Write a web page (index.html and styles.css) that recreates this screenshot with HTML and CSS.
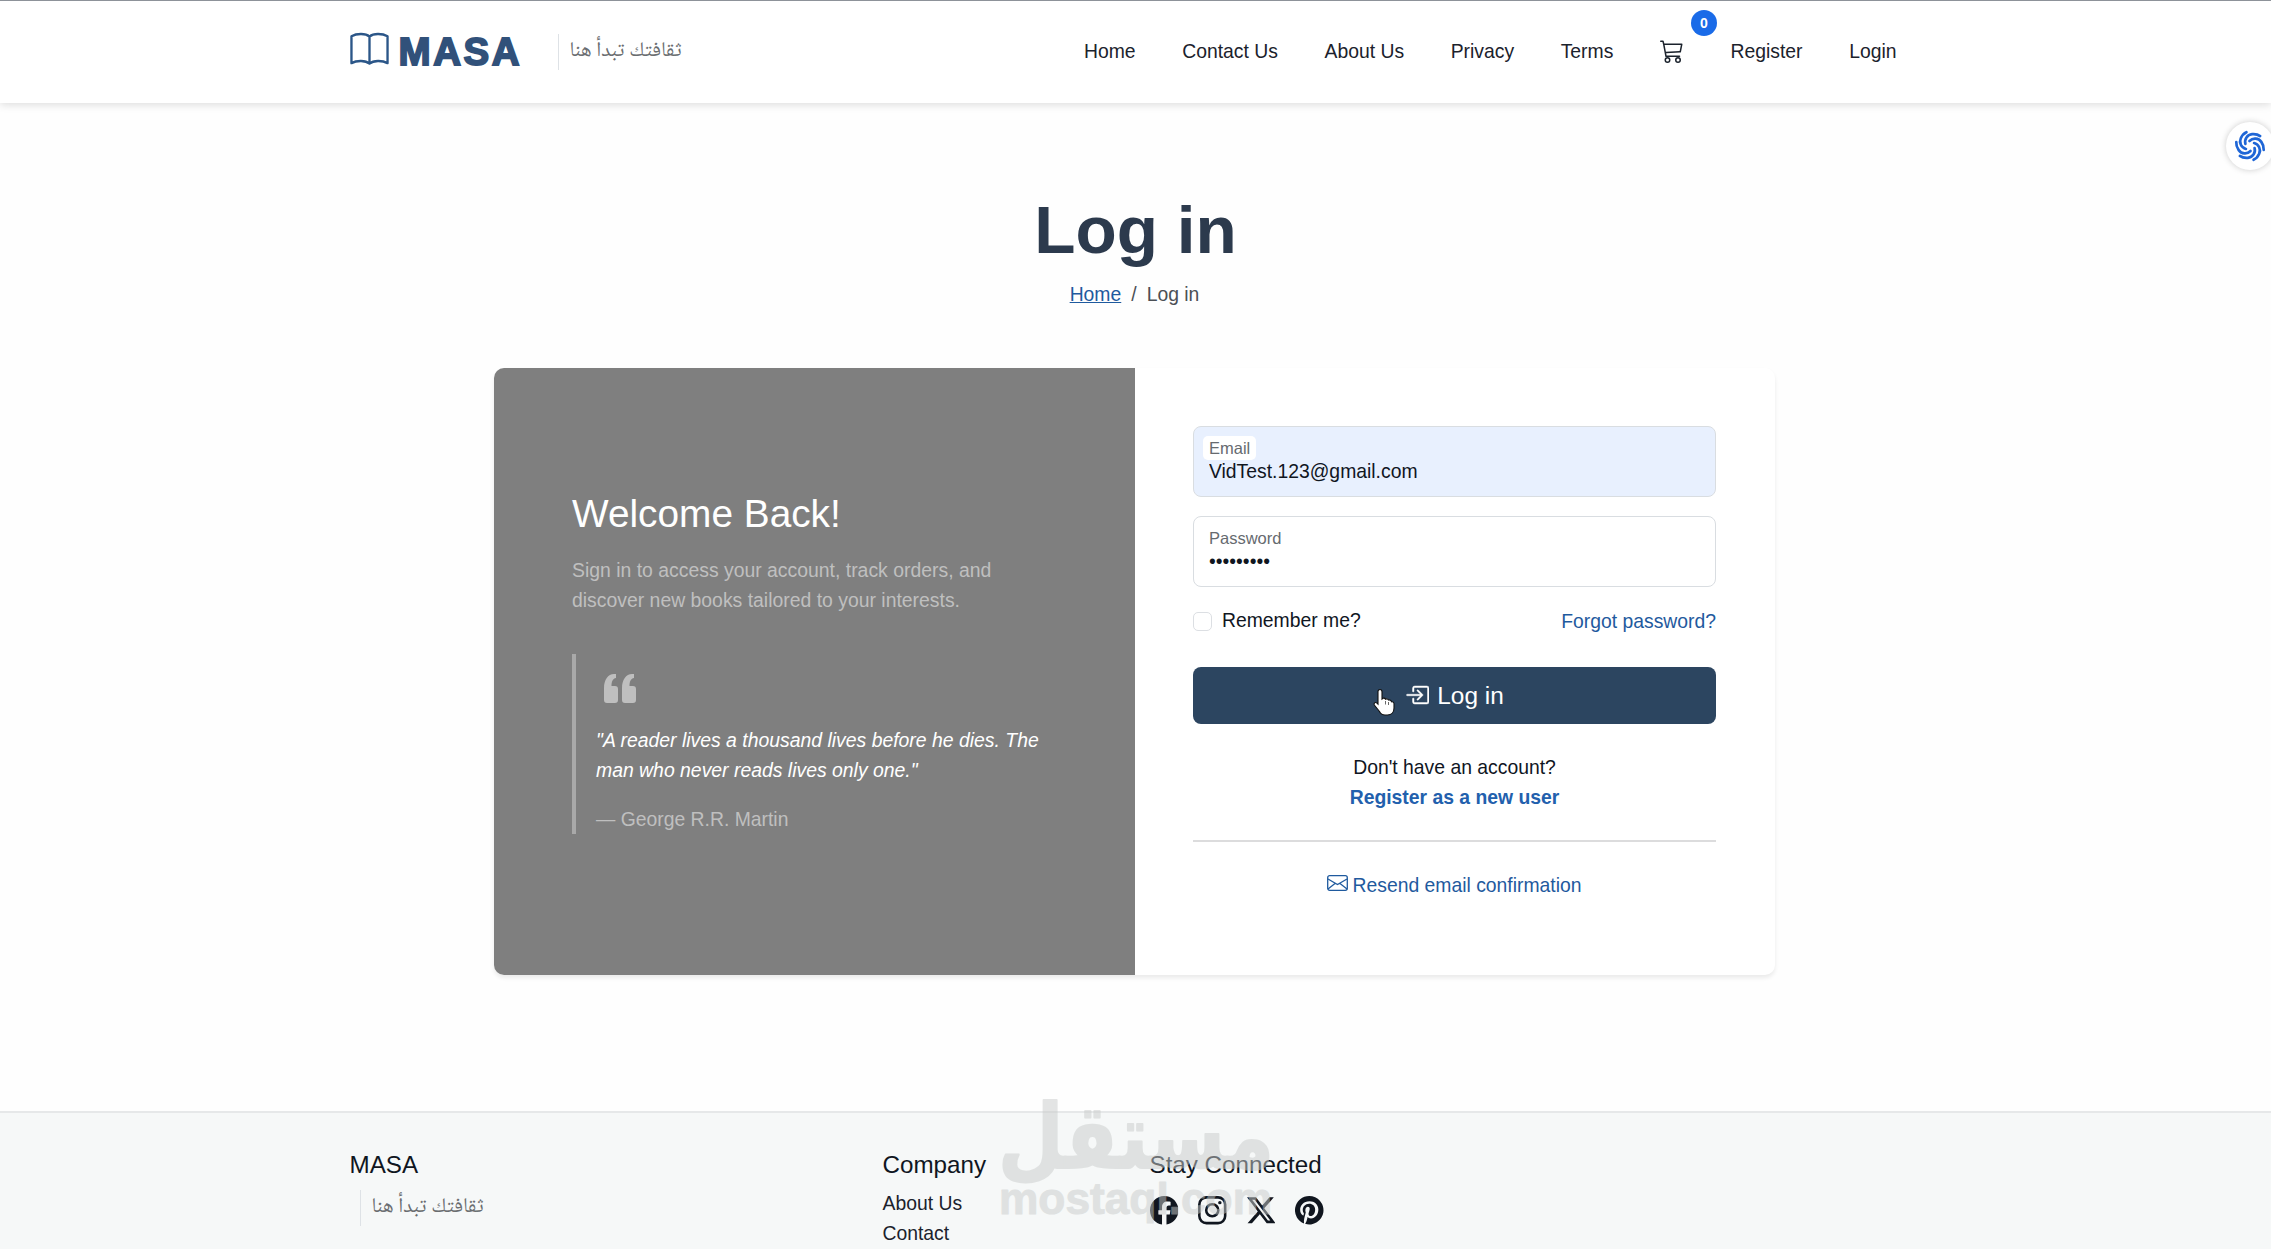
FILE: index.html
```html
<!DOCTYPE html>
<html lang="en">
<head>
    <meta charset="UTF-8">
    <meta name="viewport" content="width=device-width, initial-scale=1.0">
    <title>Log in - MASA</title>
    <link rel="stylesheet" href="styles.css">
</head>
<body>
    <header class="header">
        <div class="container header-inner">
            <a class="brand" href="#">
                <svg class="brand-icon" viewBox="0 0 40 34" fill="none" stroke="currentColor" stroke-width="2.4" stroke-linejoin="round">
                    <path d="M20 4.2C16 .8 7 .8 1.5 4v27.500C7 28.500 16 28.500 20 32c4-3.500 13-3.500 18.500-.5V4C33 .8 24 .8 20 4.200zM20 4.200V32"/>
                </svg>
                <span class="brand-name">MASA</span>
            </a>
            <div class="tagline" lang="ar"><span dir="rtl">ثقافتك تبدأ هنا</span></div>
            <nav class="nav">
                <a href="#">Home</a>
                <a href="#">Contact Us</a>
                <a href="#">About Us</a>
                <a href="#">Privacy</a>
                <a href="#">Terms</a>
                <a href="#" class="cart">
                    <svg viewBox="0 0 16 16" fill="currentColor"><path d="M0 1.5A.5.5 0 0 1 .5 1H2a.5.5 0 0 1 .485.379L2.89 3H14.5a.5.5 0 0 1 .49.598l-1 5a.5.5 0 0 1-.465.401l-9.397.472L4.415 11H13a.5.5 0 0 1 0 1H4a.5.5 0 0 1-.491-.408L2.010 3.607 1.610 2H.5a.5.5 0 0 1-.5-.5M3.102 4l.84 4.479 9.144-.459L13.890 4zM5 12a2 2 0 1 0 0 4 2 2 0 0 0 0-4m7 0a2 2 0 1 0 0 4 2 2 0 0 0 0-4m-7 1a1 1 0 1 1 0 2 1 1 0 0 1 0-2m7 0a1 1 0 1 1 0 2 1 1 0 0 1 0-2"/></svg>
                    <span class="badge">0</span>
                </a>
                <a href="#">Register</a>
                <a href="#">Login</a>
            </nav>
        </div>
    </header>

    <div class="side-widget">
        <svg viewBox="0 0 34 34" fill="none" stroke="#1f66d6" stroke-width="2.700" stroke-linecap="round">
            <path id="blade" d="M16.500 12C20 8.500 25.500 9 28.300 12.900C30 15.300 31 18 30.700 20.800"/>
            <use href="#blade" transform="rotate(60 17 17)"/>
            <use href="#blade" transform="rotate(120 17 17)"/>
            <use href="#blade" transform="rotate(180 17 17)"/>
            <use href="#blade" transform="rotate(240 17 17)"/>
            <use href="#blade" transform="rotate(300 17 17)"/>
        </svg>
    </div>

    <main class="main">
        <h1>Log in</h1>
        <div class="breadcrumb">
            <a href="#">Home</a>
            <span>/</span>
            <span>Log in</span>
        </div>

        <div class="card">
            <section class="welcome">
                <h2>Welcome Back!</h2>
                <p class="intro">Sign in to access your account, track orders, and<br>discover new books tailored to your interests.</p>
                <blockquote>
                    <svg class="quote-icon" viewBox="0 0 32 29" fill="currentColor">
                        <path d="M10 0h2v4C8.500 4.500 7.500 8 7.500 12H11a3 3 0 0 1 3 3v11a3 3 0 0 1-3 3H3a3 3 0 0 1-3-3V14C0 6 4 0 10 0zM28 0h2v4c-3.500.5-4.500 4-4.500 8H29a3 3 0 0 1 3 3v11a3 3 0 0 1-3 3h-8a3 3 0 0 1-3-3V14C18 6 22 0 28 0z"/>
                    </svg>
                    <p class="quote">"A reader lives a thousand lives before he dies. The<br>man who never reads lives only one."</p>
                    <p class="author">— George R.R. Martin</p>
                </blockquote>
            </section>

            <form class="login-form">
                <div class="field filled">
                    <label for="email">Email</label>
                    <input type="text" id="email" value="VidTest.123@gmail.com">
                </div>
                <div class="field">
                    <label for="password">Password</label>
                    <input type="password" id="password" value="bookworm1">
                </div>
                <div class="options">
                    <label class="remember"><input type="checkbox">Remember me?</label>
                    <a href="#">Forgot password?</a>
                </div>
                <button type="button" class="login-btn">
                    <svg viewBox="0 0 16 16" fill="currentColor" stroke="currentColor" stroke-width=".3"><path d="M6 3.500a.5.5 0 0 1 .5-.5h8a.5.5 0 0 1 .5.5v9a.5.5 0 0 1-.5.5h-8a.5.5 0 0 1-.5-.5v-2a.5.5 0 0 0-1 0v2A1.500 1.500 0 0 0 6.500 14h8a1.500 1.500 0 0 0 1.500-1.500v-9A1.500 1.500 0 0 0 14.500 2h-8A1.500 1.500 0 0 0 5 3.500v2a.5.5 0 0 0 1 0z"/><path d="M11.854 8.354a.5.5 0 0 0 0-.708l-3-3a.5.5 0 1 0-.708.708L10.293 7.500H1.500a.5.5 0 0 0 0 1h8.793l-2.147 2.146a.5.5 0 0 0 .708.708z"/></svg>
                    <span>Log in</span>
                    <svg class="pointer" viewBox="0 0 22 28"><path d="M7 1.500c1.400 0 2 1 2 2.300V11l1-.8c1.200-.3 2.200.2 2.500 1 .9-.7 2.600-.3 3 .9 1.400-.5 2.800.3 3 1.700 1.300-.2 2.500.5 2.500 2V20c0 4-2.500 7-6.500 7H12c-2.500 0-4.500-1.500-5.500-3.500L1.300 17c-.8-1.600.8-3.200 2.400-2.100L5 16.200V3.800c0-1.300.7-2.300 2-2.300z" fill="#fff" stroke="#111" stroke-width="1.100"/><path d="M12.500 13v3.500M15.500 14v3" stroke="#444" stroke-width=".8"/></svg>
                </button>
                <div class="signup">
                    Don't have an account?<br>
                    <a href="#">Register as a new user</a>
                </div>
                <hr>
                <a class="resend" href="#">
                    <svg viewBox="0 0 21 16" fill="none" stroke="currentColor" stroke-width="1.300"><rect x=".7" y=".7" width="19.600" height="14.600" rx="2"/><path d="M1 4l9.500 5.500L20 4M1 14l7-5.500M20 14l-7-5.500"/></svg>
                    <span>Resend email confirmation</span>
                </a>
            </form>
        </div>
    </main>

    <footer class="footer">
        <div class="container footer-inner">
            <div class="footer-brand">
                <h3>MASA</h3>
                <div class="tagline" lang="ar"><span dir="rtl">ثقافتك تبدأ هنا</span></div>
            </div>
            <div class="footer-company">
                <h3>Company</h3>
                <a href="#">About Us</a>
                <a href="#">Contact</a>
            </div>
            <div class="footer-social">
                <h3>Stay Connected</h3>
                <div class="social">
                    <svg viewBox="0 0 16 16" fill="currentColor"><path d="M16 8.049c0-4.446-3.582-8.050-8-8.050C3.580 0-.002 3.603-.002 8.050c0 4.017 2.926 7.347 6.750 7.951v-5.625h-2.030V8.050H6.750V6.275c0-2.017 1.195-3.131 3.022-3.131.876 0 1.791.157 1.791.157v1.980h-1.009c-.993 0-1.303.621-1.303 1.258v1.510h2.218l-.354 2.326H9.250V16c3.824-.604 6.750-3.934 6.750-7.951"/></svg>
                    <svg viewBox="0 0 16 16" fill="none" stroke="currentColor" stroke-width="1.450"><rect x=".75" y=".75" width="14.500" height="14.500" rx="4"/><circle cx="8" cy="8" r="3.400"/><circle cx="12.270" cy="3.730" r=".96" fill="currentColor" stroke="none"/></svg>
                    <svg viewBox="0 0 16 16" fill="currentColor"><path d="M12.600.75h2.454l-5.360 6.142L16 15.250h-4.937l-3.867-5.070-4.425 5.070H.316l5.733-6.570L0 .75h5.063l3.495 4.633L12.601.75Zm-.86 13.028h1.360L4.323 2.145H2.865z"/></svg>
                    <svg viewBox="0 0 16 16" fill="currentColor"><path d="M8 0a8 8 0 0 0-2.915 15.452c-.070-.633-.134-1.606.027-2.297.146-.625.938-3.977.938-3.977s-.239-.479-.239-1.187c0-1.113.645-1.943 1.448-1.943.682 0 1.012.512 1.012 1.127 0 .686-.437 1.712-.663 2.663-.188.796.4 1.446 1.185 1.446 1.422 0 2.515-1.500 2.515-3.664 0-1.915-1.377-3.254-3.342-3.254-2.276 0-3.612 1.707-3.612 3.471 0 .688.265 1.425.595 1.826a.24.24 0 0 1 .056.230c-.061.252-.196.796-.222.907-.035.146-.116.177-.268.107-1-.465-1.624-1.926-1.624-3.100 0-2.523 1.834-4.840 5.286-4.840 2.775 0 4.932 1.977 4.932 4.620 0 2.757-1.739 4.976-4.151 4.976-.811 0-1.573-.421-1.834-.919l-.498 1.902c-.181.695-.669 1.566-.995 2.097A8 8 0 1 0 8 0"/></svg>
                </div>
            </div>
        </div>
    </footer>

    <div class="watermark">
        <svg viewBox="0 0 274 130">
            <text class="wm-ar" x="137" y="70" text-anchor="middle" textLength="276" lengthAdjust="spacingAndGlyphs">مستقل</text>
            <text class="wm-en" x="0" y="116" textLength="273" lengthAdjust="spacingAndGlyphs">mostaql.com</text>
        </svg>
    </div>
</body>
</html>
```

FILE: styles.css
```css
* {
    box-sizing: border-box;
}

body {
    margin: 0;
    height: 1249px;
    overflow: hidden;
    background: #fefefe;
    color: #10161f;
    font-family: "Liberation Sans", Arial, sans-serif;
    font-size: 19.35px;
    line-height: 30px;
}

a {
    color: #1f5a9e;
    text-decoration: none;
}

h1, h2, h3, p, blockquote {
    margin: 0;
}

svg {
    display: block;
    flex: none;
}

.container {
    width: 1572px;
    margin: 0 auto;
}

/* header */
.header {
    height: 103px;
    background: #fff;
    border-top: 1px solid #8d9299;
    box-shadow: 0 2px 8px rgba(0, 0, 0, 0.13);
}

.header-inner {
    display: flex;
    align-items: center;
    height: 101px;
}

.brand {
    display: flex;
    align-items: center;
    gap: 10px;
    width: 208px;
    color: #2b5688;
}

.brand-icon {
    width: 39px;
    height: 34px;
    margin-top: -5px;
}

.brand-name {
    padding-top: 1px;
    font-size: 38.5px;
    font-weight: bold;
    letter-spacing: 2.6px;
    color: #31517a;
    -webkit-text-stroke: 1.8px #31517a;
}

.tagline {
    display: flex;
    align-items: center;
    height: 36px;
    padding-left: 11px;
    border-left: 1px solid #dee2e6;
    color: #6a6d70;
    font-family: "Noto Naskh Arabic", "DejaVu Sans", serif;
    font-size: 21px;
    white-space: nowrap;
}

.nav {
    display: flex;
    gap: 46.6px;
    margin-left: auto;
    padding: 0 25px 2px 0;
}

.nav a {
    color: #1b222c;
}

.cart {
    position: relative;
    width: 24px;
}

.cart svg {
    width: 24px;
    height: 24px;
    margin-top: 3px;
}

.badge {
    position: absolute;
    left: 31px;
    top: -26px;
    width: 26px;
    height: 26px;
    border-radius: 50%;
    background: #1a6be8;
    color: #fff;
    font-size: 14px;
    font-weight: bold;
    line-height: 26px;
    text-align: center;
}

.side-widget {
    position: absolute;
    right: -3px;
    top: 122px;
    width: 48px;
    height: 48px;
    padding: 7px;
    border-radius: 50%;
    background: #fff;
    box-shadow: 0 0 6px rgba(0, 0, 0, 0.2);
}

/* page title */
.main {
    padding: 89px 2px 0 0;
    height: 1008px;
}

h1 {
    padding-left: 2px;
    color: #2c3a4d;
    font-size: 67.5px;
    line-height: 76px;
    text-align: center;
}

.breadcrumb {
    display: flex;
    justify-content: center;
    gap: 10px;
    margin-top: 11px;
    color: #4b4f55;
}

.breadcrumb a {
    text-decoration: underline;
}

/* login card */
.card {
    display: flex;
    width: 1281px;
    height: 607px;
    margin: 59px auto 0;
    border-radius: 10px;
    overflow: hidden;
    background: #fff;
    box-shadow: 0 3px 4px rgba(0, 0, 0, 0.08);
}

.welcome {
    width: 641px;
    padding: 122px 78px 0;
    background: #7f7f7f;
    color: #fff;
}

h2 {
    font-size: 38.8px;
    font-weight: normal;
    line-height: 48px;
}

.intro {
    margin-top: 17px;
    color: #bfbfbf;
    font-size: 19.4px;
    white-space: nowrap;
}

blockquote {
    height: 180px;
    margin-top: 39px;
    padding: 20px 0 0 20px;
    border-left: 4px solid #a9a9a9;
}

.quote-icon {
    width: 32px;
    height: 29px;
    margin-left: 8px;
    color: #bfbfbf;
}

.quote {
    margin-top: 22px;
    font-size: 19.4px;
    font-style: italic;
    white-space: nowrap;
}

.author {
    margin-top: 19px;
    color: #bfbfbf;
}

.login-form {
    flex: 1;
    padding: 58px 59px 0 58px;
}

.field {
    height: 71px;
    margin-bottom: 19px;
    padding: 9px;
    border: 1px solid #d9dde1;
    border-radius: 8px;
}

.field label {
    display: block;
    width: fit-content;
    height: 24px;
    padding: 0 6px;
    border-radius: 5px;
    background: #fff;
    color: #666a6f;
    font-size: 16.5px;
    line-height: 24px;
}

.field input {
    display: block;
    width: 100%;
    height: 24px;
    margin-top: -1px;
    padding: 0 6px;
    border: 0;
    background: none;
    color: #10161f;
    font: inherit;
    line-height: 24px;
}

.filled {
    background: #e8f0fe;
}

.options {
    display: flex;
    justify-content: space-between;
    margin-top: -2px;
}

.remember {
    display: flex;
    align-items: center;
}

.remember input {
    appearance: none;
    width: 19px;
    height: 19px;
    margin: 2px 10px 0 0;
    border: 1px solid #dcdfe3;
    border-radius: 5px;
}

.options a {
    margin-top: 2px;
}

.login-btn {
    position: relative;
    display: flex;
    align-items: center;
    justify-content: center;
    gap: 8px;
    width: 100%;
    height: 57px;
    margin-top: 31px;
    padding: 0;
    border: 0;
    border-radius: 8px;
    background: #2c4560;
    color: #fff;
    font: 24.4px "Liberation Sans", Arial, sans-serif;
}

.login-btn svg {
    width: 24px;
    height: 24px;
    margin-top: -2px;
}

.login-btn .pointer {
    position: absolute;
    left: 180px;
    top: 23px;
    width: 22px;
    height: 28px;
}

.signup {
    margin-top: 28px;
    text-align: center;
}

.signup a {
    font-weight: bold;
    color: #2260ad;
}

hr {
    height: 2px;
    margin: 28px 0 28px;
    border: 0;
    background: #dcdcdd;
}

.resend {
    display: flex;
    align-items: center;
    justify-content: center;
    gap: 4px;
}

.resend svg {
    width: 21px;
    height: 16px;
    margin-top: -4px;
}

/* footer */
.footer {
    height: 138px;
    border-top: 2px solid #e6e8e9;
    background: #f6f8f8;
}

.footer-inner {
    display: flex;
    padding-top: 36px;
}

h3 {
    font-size: 24.2px;
    font-weight: normal;
    line-height: 32px;
}

.footer-brand {
    width: 533px;
}

.footer-brand .tagline {
    margin: 9px 0 0 10px;
}

.footer-company {
    width: 267px;
}

.footer-company a {
    display: block;
    color: #1b222c;
}

.footer-company h3 {
    margin-bottom: 7px;
}

.social {
    display: flex;
    gap: 20px;
    margin-top: 15px;
}

.social svg {
    width: 28.5px;
    height: 28.5px;
}

.watermark {
    position: absolute;
    left: 999px;
    top: 1098px;
    width: 274px;
    height: 130px;
    opacity: 0.5;
    pointer-events: none;
}

.watermark svg {
    overflow: visible;
    fill: #c9cccb;
    stroke: #c9cccb;
    stroke-linejoin: round;
}

.wm-ar {
    font: bold 90px "DejaVu Sans", sans-serif;
    stroke-width: 2px;
}

.wm-en {
    font: bold 45px "Liberation Sans", sans-serif;
    stroke-width: 1px;
}
```
